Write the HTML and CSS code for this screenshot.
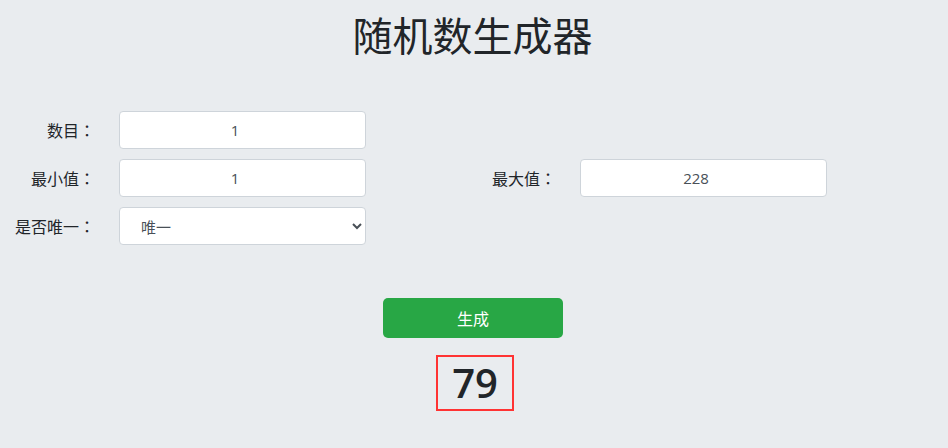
FILE: index.html
```html
<!DOCTYPE html>
<html lang="zh">
<head>
<meta charset="utf-8">
<title>随机数生成器</title>
<link rel="stylesheet" href="styles.css">
</head>
<body>
<h1 class="title">随机数生成器</h1>
<form class="form">
  <div class="row">
    <div class="pair">
      <label class="label">数目<span class="colon" lang="ja">：</span></label>
      <input class="control" type="number" value="1">
    </div>
  </div>
  <div class="row">
    <div class="pair">
      <label class="label">最小值<span class="colon" lang="ja">：</span></label>
      <input class="control" type="number" value="1">
    </div>
    <div class="pair">
      <label class="label">最大值<span class="colon" lang="ja">：</span></label>
      <input class="control" type="number" value="228">
    </div>
  </div>
  <div class="row">
    <div class="pair">
      <label class="label">是否唯一<span class="colon" lang="ja">：</span></label>
      <select class="control select">
        <option>唯一</option>
        <option>不唯一</option>
      </select>
    </div>
  </div>
</form>
<div class="actions">
  <button class="btn" type="button">生成</button>
</div>
<div class="result-wrap">
  <div class="result">79</div>
</div>
</body>
</html>
```
FILE: styles.css
```css
html, body {
  margin: 0;
  padding: 0;
}
body {
  background: #e9ecef;
  color: #212529;
  font-family: "Open Sans", "Noto Sans CJK SC", sans-serif;
  font-size: 16px;
  width: 948px;
  height: 448px;
  overflow: hidden;
}
.title {
  margin: 10px 0 0;
  font-size: 40px;
  line-height: 48px;
  font-weight: 400;
  text-align: center;
  font-family: "Noto Sans CJK SC", sans-serif;
  padding-right: 3px;
}
.form {
  margin-top: 53px;
  display: flex;
  flex-direction: column;
  gap: 10px;
}
.row {
  display: flex;
  height: 38px;
}
.pair {
  width: 461px;
  display: flex;
  align-items: center;
}
.label {
  width: 95px;
  margin-right: 24px;
  text-align: right;
  font-family: "Noto Sans CJK SC", sans-serif;
  font-size: 16px;
  white-space: nowrap;
}
.colon {
  font-family: "Noto Sans CJK JP", sans-serif;
}
.control {
  box-sizing: border-box;
  width: 247px;
  height: 38px;
  border: 1px solid #ced4da;
  border-radius: 4px;
  background: #fff;
  color: #495057;
  font-family: "Open Sans", "Noto Sans CJK SC", sans-serif;
  font-size: 15px;
  text-align: center;
  padding: 0 12px;
  margin: 0;
}
.select {
  text-align: left;
  padding-left: 17px;
  font-family: "Noto Sans CJK SC", sans-serif;
  font-size: 15px;
}
.actions {
  margin-top: 53px;
  display: flex;
  justify-content: center;
  padding-right: 2px;
}
.btn {
  width: 180px;
  height: 40px;
  border: none;
  border-radius: 5px;
  background: #28a745;
  color: #fff;
  font-family: "Noto Sans CJK SC", sans-serif;
  font-size: 16px;
  padding: 0;
}
.result-wrap {
  margin-top: 17px;
  display: flex;
  justify-content: center;
  padding-left: 2px;
}
.result {
  box-sizing: border-box;
  width: 78px;
  height: 56px;
  border: 2px solid #ff3333;
  text-align: center;
  font-family: "Open Sans", sans-serif;
  font-weight: 600;
  font-size: 40px;
  line-height: 52px;
  color: #212529;
}
```
